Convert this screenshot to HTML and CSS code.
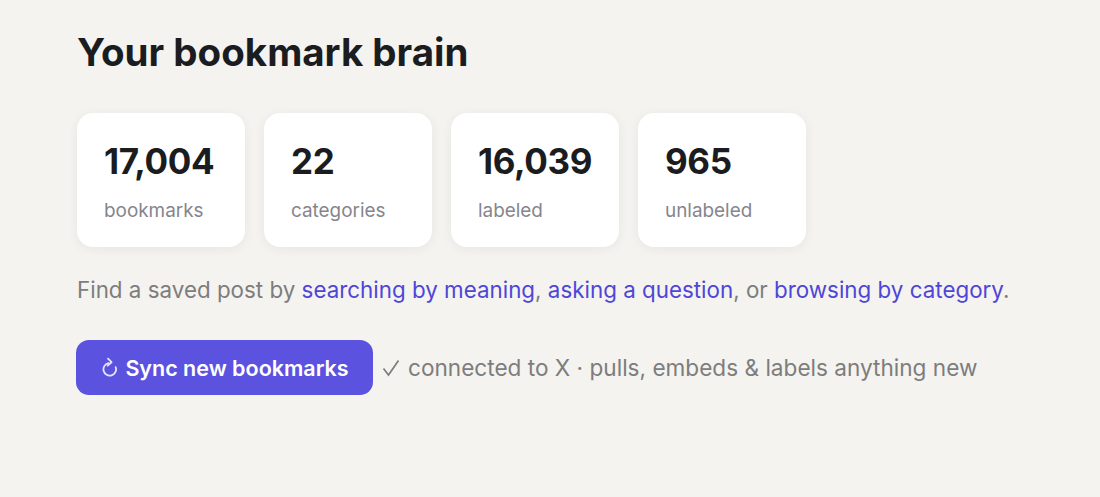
FILE: index.html
```html
<!DOCTYPE html>
<html>
    <head>
        <title>Your bookmark brain</title>
        <link rel="stylesheet" href="styles.css">
    </head>
    <body>
        <h1 class="title">Your bookmark brain</h1>
        <div class="stats">
            <div class="card"><div class="num">17,004</div><div class="label">bookmarks</div></div>
            <div class="card"><div class="num">22</div><div class="label">categories</div></div>
            <div class="card"><div class="num">16,039</div><div class="label">labeled</div></div>
            <div class="card"><div class="num">965</div><div class="label">unlabeled</div></div>
        </div>
        <p class="intro">Find a saved post by <a href="#">searching by meaning</a>, <a href="#">asking a question</a>, or <a href="#">browsing by category</a>.</p>
        <div class="sync">
            <button class="sync-btn">
                <svg class="sync-icon" viewBox="0 0 20 22" width="20" height="22" fill="none" stroke="currentColor" stroke-width="1.8" stroke-linecap="round" stroke-linejoin="round">
                    <path d="M15.7 10.2A6.3 6.3 0 1 1 8.6 6.1"/>
                    <path d="M8 1.6L11.6 5.2 7.6 8.6"/>
                </svg>
                Sync new bookmarks
            </button>
            <svg class="check" viewBox="0 0 18 18" width="18" height="18" fill="none" stroke="currentColor" stroke-width="1.7">
                <path d="M1.5 9.5L6.5 16 16.5 1.5"/>
            </svg>
            <span class="status">connected to X · pulls, embeds &amp; labels anything new</span>
        </div>
    </body>
</html>
```

FILE: styles.css
```css
body {
    margin: 0;
    padding: 28px 0 0 77px;
    background-color: #f4f3ef;
    font-family: "Inter", "Liberation Sans", sans-serif;
    color: #1b1c20;
}
.title {
    margin: 0;
    font-size: 38.5px;
    line-height: 48px;
    font-weight: 700;
}
.stats {
    display: flex;
    gap: 19px;
    margin-top: 37px;
}
.card {
    box-sizing: border-box;
    width: 168px;
    height: 134px;
    padding: 27px 27px 0;
    background-color: white;
    border-radius: 16px;
    box-shadow: 0 2px 12px rgba(0, 0, 0, 0.06);
}
.num {
    font-size: 35px;
    line-height: 42px;
    font-weight: 700;
    letter-spacing: -0.4px;
}
.label {
    margin-top: 17px;
    font-size: 18.9px;
    line-height: 24px;
    color: #85858d;
}
.intro {
    margin: 28px 0 0;
    font-size: 22.38px;
    line-height: 30px;
    color: #7d7d7d;
}
.intro a {
    color: #4f46d8;
    text-decoration: none;
}
.sync {
    display: flex;
    align-items: center;
    margin: 35px 0 0 -1px;
    color: #7d7d7d;
}
.sync-btn {
    display: flex;
    align-items: center;
    justify-content: center;
    gap: 5px;
    width: 297px;
    height: 55px;
    margin-right: 9px;
    padding: 0;
    border: 0;
    border-radius: 13px;
    background-color: #5c52e0;
    color: white;
    font-family: inherit;
    font-size: 21.5px;
    font-weight: 600;
}
.sync-icon {
    opacity: 0.85;
}
.check {
    margin-right: 8px;
}
.status {
    font-size: 22.6px;
}
```
